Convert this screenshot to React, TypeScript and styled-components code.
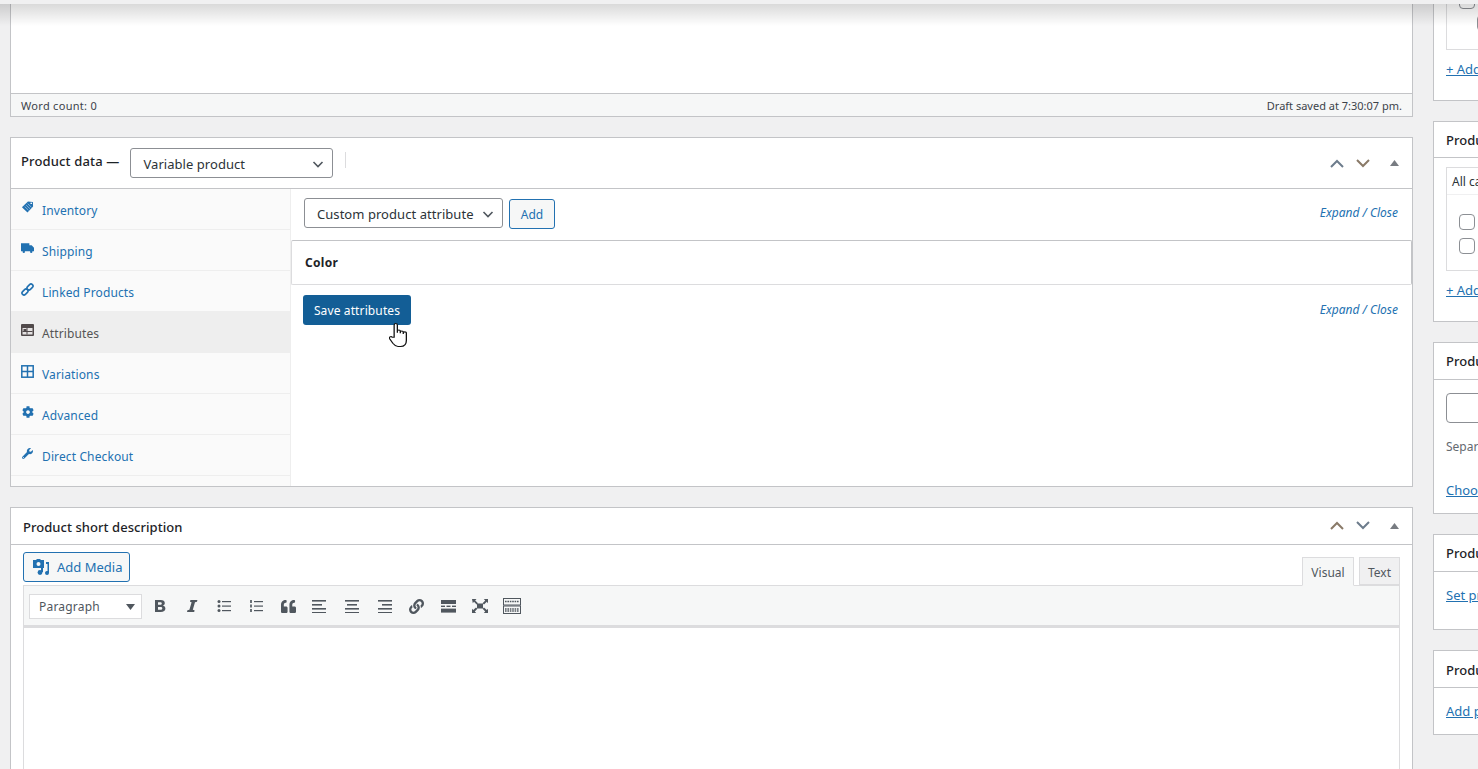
import styled, { createGlobalStyle } from "styled-components";
import { FaCog, FaLink, FaQuoteLeft, FaWrench } from "react-icons/fa";
import type { ReactNode } from "react";

const Global = createGlobalStyle`
  html, body { margin: 0; height: 769px; overflow: hidden; background: #f0f0f1; }
  body { font-family: "Noto Sans", "Liberation Sans", sans-serif; font-size: 13px; color: #3c434a; }
  * { box-sizing: border-box; }
`;

const Page = styled.div`
  position: relative;
  width: 1478px;
  height: 769px;
  overflow: hidden;
  padding-left: 10px;
  display: grid;
  grid-template-columns: 1403px 280px;
  column-gap: 20px;
  align-items: start;
`;

// the sticky admin toolbar that has scrolled away, only its shadow shows
const TopShade = styled.div`
  position: absolute;
  left: 0;
  right: 0;
  top: 0;
  height: 4px;
  background: #f0f0f1;

  &::after {
    content: "";
    position: absolute;
    left: 0;
    right: 0;
    top: 4px;
    height: 22px;
    background: linear-gradient(rgba(0, 0, 0, 0.15), rgba(0, 0, 0, 0));
  }
`;

const MainCol = styled.div`
  display: flex;
  flex-direction: column;
  gap: 20px;
`;

const SideCol = styled.div`
  display: flex;
  flex-direction: column;
  gap: 20px;
`;

const Box = styled.section`
  background: #fff;
  border: 1px solid #c3c4c7;
`;

const EditorBox = styled(Box)`
  height: 117px;
  border-top: 0;
  display: flex;
  flex-direction: column;
  justify-content: flex-end;
`;

const StatusBar = styled.div`
  height: 23px;
  border-top: 1px solid #c3c4c7;
  background: #f6f7f7;
  display: flex;
  align-items: center;
  justify-content: space-between;
  padding: 0 10px;
  font-size: 11px;
  color: #3c434a;
`;

const WordCount = styled.span`
  letter-spacing: 0.3px;
`;

const DataHead = styled.div`
  height: 51px;
  border-bottom: 1px solid #c3c4c7;
  display: flex;
  align-items: center;
  padding: 0 5px 0 10px;
`;

const HeadLabel = styled.span`
  font-size: 13px;
  font-weight: 500;
  letter-spacing: 0.15px;
  color: #1d2327;
  margin-right: 11px;
  position: relative;
  top: -2px;
`;

const SelectBox = styled.div<{ $w: number }>`
  width: ${(p) => p.$w}px;
  height: 30px;
  border: 1px solid #8c8f94;
  border-radius: 3px;
  background: #fff;
  display: flex;
  align-items: center;
  justify-content: space-between;
  padding: 1px 8px 0 12px;
  font-size: 13px;
  letter-spacing: 0.05px;
  color: #2c3338;
`;

const HeadDivider = styled.span`
  width: 1px;
  height: 16px;
  background: #dcdcde;
  margin-left: 12px;
  position: relative;
  top: -3px;
`;

const HandleGroup = styled.div`
  margin-left: auto;
  display: flex;
  align-items: center;
`;

const HandleBtn = styled.span`
  width: 26px;
  height: 20px;
  display: flex;
  align-items: center;
  justify-content: center;
  color: #787c82;
`;

const ToggleBtn = styled(HandleBtn)`
  margin-left: 5px;
`;

const DataBody = styled.div`
  display: grid;
  grid-template-columns: 280px 1fr;
  height: 297px;
`;

const TabList = styled.ul`
  list-style: none;
  margin: 0;
  padding: 0;
  background: #fafafa;
  border-right: 1px solid #eee;
`;

const TabItem = styled.li<{ $active?: boolean }>`
  height: 41px;
  padding: 2px 0 0 10px;
  display: flex;
  align-items: center;
  gap: 8px;
  font-size: 12px;
  letter-spacing: 0.12px;
  color: ${(p) => (p.$active ? "#555" : "#2271b1")};
  background: ${(p) => (p.$active ? "#eee" : "transparent")};
  border-bottom: 1px solid #eee;
`;

const TabIcon = styled.span`
  width: 13px;
  height: 13px;
  display: flex;
  align-items: center;
  justify-content: center;
  position: relative;
  top: -3px;
  flex: none;
`;

const AttrPane = styled.div`
  display: flex;
  flex-direction: column;
`;

const AttrToolbar = styled.div`
  height: 51px;
  display: flex;
  align-items: center;
  padding: 0 14px 3px 13px;
  gap: 6px;
`;

const AddBtn = styled.button`
  height: 30px;
  width: 46px;
  margin-top: 2px;
  border: 1px solid #2271b1;
  border-radius: 3px;
  background: #f6f7f7;
  color: #2271b1;
  font: inherit;
  font-size: 12px;
  padding: 0;
`;

const ExpandLinks = styled.span`
  margin-left: auto;
  margin-bottom: 2px;
  font-size: 12px;
  font-style: italic;
  font-weight: 400;
  color: #2271b1;
`;

const AttrRow = styled.div`
  height: 45px;
  border: 1px solid #dcdcde;
  border-top-color: #c3c4c7;
  border-right-color: #c3c4c7;
  border-radius: 2px;
  display: flex;
  align-items: center;
  padding: 0 13px 1px;
  font-size: 12px;
  letter-spacing: 0.3px;
  font-weight: 700;
  color: #1d2327;
`;

const SaveRow = styled.div`
  position: relative;
  height: 50px;
  display: flex;
  align-items: center;
  padding: 0 14px 0 12px;
`;

const SaveBtn = styled.button`
  height: 30px;
  width: 108px;
  border: 0;
  border-radius: 3px;
  background: #135e96;
  color: #fff;
  font: inherit;
  font-size: 12px;
  letter-spacing: 0.12px;
  padding: 0;
`;

const Cursor = styled.svg`
  position: absolute;
  left: 98px;
  top: 38px;
`;

const ShortBox = styled(Box)`
  height: 300px;
`;

const PlainHead = styled.div<{ $h?: number; $pt?: number }>`
  height: ${(p) => p.$h ?? 37}px;
  border-bottom: 1px solid #c3c4c7;
  display: flex;
  align-items: center;
  padding: ${(p) => p.$pt ?? 0}px 5px 0 12px;
  font-size: 13px;
  font-weight: 500;
  letter-spacing: 0.05px;
  color: #1d2327;
  white-space: nowrap;

  ${HandleGroup} {
    margin-top: -2px;
  }
`;

const WpWrap = styled.div`
  padding: 7px 12px 0;
`;

const WpTools = styled.div`
  height: 33px;
  display: flex;
  align-items: flex-start;
  justify-content: space-between;
`;

const MediaBtn = styled.button`
  width: 107px;
  height: 30px;
  border: 1px solid #2271b1;
  border-radius: 3px;
  background: #f6f7f7;
  color: #2271b1;
  font: inherit;
  font-size: 13px;
  padding: 0 0 0 8px;
  display: flex;
  align-items: center;
  gap: 7px;
`;

const ModeTabs = styled.div`
  display: flex;
  align-items: flex-end;
  gap: 5px;
  height: 33px;
  position: relative;
  z-index: 1;
`;

const ModeTab = styled.span<{ $active?: boolean }>`
  height: ${(p) => (p.$active ? 29 : 28)}px;
  width: ${(p) => (p.$active ? 52 : 41)}px;
  padding-top: ${(p) => (p.$active ? 1 : 2)}px;
  border: 1px solid #dcdcde;
  border-bottom-color: ${(p) => (p.$active ? "#f6f7f7" : "#dcdcde")};
  background: ${(p) => (p.$active ? "#f6f7f7" : "#f0f0f1")};
  color: #50575e;
  font-size: 12px;
  display: flex;
  align-items: center;
  justify-content: center;
  margin-bottom: ${(p) => (p.$active ? -1 : 0)}px;
`;

const McePanel = styled.div`
  height: 43px;
  border: 1px solid #dcdcde;
  border-bottom: 3px solid #dcdcde;
  background: #f6f7f7;
  display: flex;
  align-items: center;
  padding: 1px 0 0 5px;
`;

const FormatSelect = styled.div`
  width: 113px;
  height: 25px;
  background: #fff;
  border: 1px solid #dcdcde;
  margin-right: 2px;
  display: flex;
  align-items: center;
  justify-content: space-between;
  padding: 1px 6px 0 9px;
  font-size: 12px;
  letter-spacing: 0.2px;
  color: #50575e;
`;

const MceBtn = styled.span`
  width: 32px;
  height: 28px;
  display: flex;
  align-items: center;
  justify-content: center;
  color: #50575e;
`;

const MceCanvas = styled.div`
  height: 200px;
  background: #fff;
  border-left: 1px solid #dcdcde;
  border-right: 1px solid #dcdcde;
`;

const SideBody = styled.div`
  padding: 0 12px;
  white-space: nowrap;
`;

const FirstSide = styled(Box)`
  height: 101px;
  border-top: 0;
  display: flex;
  flex-direction: column;
`;

const FirstList = styled.div`
  height: 50px;
  margin: 0 12px;
  border: 1px solid #dcdcde;
  border-top: 0;
  padding-left: 12px;
`;

const Check = styled.span`
  display: block;
  width: 16px;
  height: 16px;
  border: 1px solid #8c8f94;
  border-radius: 4px;
  background: #fff;
`;

const CutCheck = styled(Check)`
  margin-top: -7px;
`;

const IndentCheck = styled(Check)`
  margin: 6px 0 0 18px;
`;

const SideLink = styled.a<{ $mt: number }>`
  display: block;
  margin-top: ${(p) => p.$mt}px;
  font-size: 13px;
  line-height: 18px;
  color: #2271b1;
  text-decoration: underline;
`;

const CatPanel = styled.div`
  height: 104px;
  margin-top: 9px;
  border: 1px solid #dcdcde;
`;

const CatTab = styled.div`
  height: 27px;
  padding: 5px 5px 0;
  font-size: 12px;
  color: #2c3338;
  border-bottom: 1px solid #f0f0f1;
`;

const CatList = styled.div`
  padding: 19px 0 0 12px;
  display: flex;
  flex-direction: column;
  gap: 8px;
`;

const TagInput = styled.div`
  height: 30px;
  width: 200px;
  margin-top: 13px;
  border: 1px solid #8c8f94;
  border-radius: 4px;
  background: #fff;
`;

const Hint = styled.p`
  margin: 15px 0 0;
  font-size: 12px;
  line-height: 18px;
  color: #646970;
`;

const TagsBox = styled(Box)`
  height: 172px;
`;

const ImageBox = styled(Box)`
  height: 96px;
`;

const GalleryBox = styled(Box)`
  height: 85px;
`;

const CatBox = styled(Box)`
  height: 201px;
`;

const Chevron = ({ size = 12 }: { size?: number }) => (
  <svg width={size} height={size} viewBox="0 0 12 12" fill="none" stroke="#50575e" strokeWidth="1.6">
    <path d="M1.5 4 L6 8.5 L10.5 4" />
  </svg>
);

const Handles = ({ first }: { first?: boolean }) => (
  <HandleGroup>
    <HandleBtn>
      <svg width="14" height="9" viewBox="0 0 14 9" fill="none" stroke={first ? "#8a7a68" : "#6d7c8c"} strokeWidth="2">
        <path d="M1 8 L7 2 L13 8" />
      </svg>
    </HandleBtn>
    <HandleBtn>
      <svg width="14" height="9" viewBox="0 0 14 9" fill="none" stroke={first ? "#6d7c8c" : "#8a7a68"} strokeWidth="2">
        <path d="M1 1 L7 7 L13 1" />
      </svg>
    </HandleBtn>
    <ToggleBtn>
      <svg width="9" height="6" viewBox="0 0 9 6" fill="#787c82">
        <path d="M4.5 0 L9 6 H0 Z" />
      </svg>
    </ToggleBtn>
  </HandleGroup>
);

const TagIcon = () => (
  <svg width="14" height="14" viewBox="0 0 14 14">
    <path d="M7.5 1 L12.8 1.6 L13 6.5 L7 12.8 L1 7.2 Z" fill="#2271b1" />
    <path d="M4 6.6 L8 10.4 M5.6 5 L9.6 8.8 M7.2 3.4 L11.2 7.2" stroke="#a9c8e4" strokeWidth="0.8" />
    <circle cx="11" cy="3" r="0.9" fill="#fff" />
  </svg>
);

const TruckIcon = () => (
  <svg width="14" height="12" viewBox="0 0 14 12" fill="#2271b1">
    <path d="M0 1 H9 V3 H11.5 L14 5.6 V9.6 H0 Z" />
    <circle cx="3" cy="10" r="1.3" />
    <circle cx="11" cy="10" r="1.3" />
  </svg>
);

const LinkIcon = () => (
  <svg width="13" height="13" viewBox="0 0 13 13" fill="none" stroke="#2271b1" strokeWidth="1.6">
    <rect x="-3.4" y="-2" width="6.8" height="4" rx="2" transform="translate(4 9) rotate(-45)" />
    <rect x="-3.4" y="-2" width="6.8" height="4" rx="2" transform="translate(9 4) rotate(-45)" />
  </svg>
);

const AttrIcon = () => (
  <svg width="13" height="12" viewBox="0 0 13 12">
    <rect x="0" y="0" width="13" height="12" rx="1" fill="#50494a" />
    <rect x="1.5" y="4" width="10" height="6.5" fill="#e4e2e2" />
    <rect x="2.5" y="5" width="3" height="2" fill="#50494a" />
    <rect x="1.5" y="7" width="10" height="1" fill="#50494a" />
    <rect x="5.5" y="4" width="1" height="6.5" fill="#50494a" />
  </svg>
);

const GridIcon = () => (
  <svg width="13" height="13" viewBox="0 0 13 13" fill="none" stroke="#2271b1" strokeWidth="1.5">
    <rect x="0.8" y="0.8" width="11.4" height="11.4" />
    <path d="M6.5 1 V12 M1 6.5 H12" />
  </svg>
);

const tabs: { label: string; icon: ReactNode; active?: boolean }[] = [
  { label: "Inventory", icon: <TagIcon /> },
  { label: "Shipping", icon: <TruckIcon /> },
  { label: "Linked Products", icon: <LinkIcon /> },
  { label: "Attributes", icon: <AttrIcon />, active: true },
  { label: "Variations", icon: <GridIcon /> },
  { label: "Advanced", icon: <FaCog size={12} color="#2271b1" /> },
  { label: "Direct Checkout", icon: <FaWrench size={11} color="#2271b1" /> },
];

const ListLines = ({ numbered }: { numbered?: boolean }) => (
  <svg width="14" height="14" viewBox="0 0 14 14" fill="#50575e">
    {[2, 6.5, 11].map((y) => (
      <g key={y}>
        <rect x="5" y={y} width="9" height="1.2" />
        {numbered ? <rect x="1" y={y - 1} width="2" height="3" fill="#6b7278" /> : <circle cx="2" cy={y + 0.6} r="1.5" />}
      </g>
    ))}
  </svg>
);

const AlignLines = ({ rows }: { rows: [number, number][] }) => (
  <svg width="16" height="14" viewBox="0 0 16 14" fill="#50575e">
    {rows.map(([x, w], i) => (
      <rect key={i} x={x} y={1 + i * 4} width={w} height="1.6" />
    ))}
  </svg>
);

const toolbarIcons: ReactNode[] = [
  <svg width="12" height="14" viewBox="0 0 12 14" fill="#50575e">
    <path d="M1 1 H6.6 C9.4 1 10.8 2.2 10.8 4 C10.8 5.3 10 6.2 8.8 6.6 C10.4 7 11.4 8 11.4 9.6 C11.4 11.8 9.6 13 6.8 13 H1 Z M4 3.2 V5.8 H6.2 C7.2 5.8 7.8 5.3 7.8 4.5 C7.8 3.7 7.2 3.2 6.2 3.2 Z M4 7.9 V10.8 H6.4 C7.6 10.8 8.3 10.3 8.3 9.3 C8.3 8.4 7.6 7.9 6.4 7.9 Z" fillRule="evenodd" />
  </svg>,
  <svg width="12" height="14" viewBox="0 0 12 14" fill="#50575e">
    <path d="M4.4 1 H11.4 L11 2.8 L9 3.2 L6.8 10.8 L8.6 11.2 L8.2 13 H1 L1.4 11.2 L3.4 10.8 L5.6 3.2 L4 2.8 Z" />
  </svg>,
  <ListLines />,
  <ListLines numbered />,
  <FaQuoteLeft size={15} color="#50575e" />,
  <AlignLines rows={[[0, 14], [0, 10], [0, 14], [0, 14]]} />,
  <AlignLines rows={[[1, 14], [3, 10], [1, 14], [1, 14]]} />,
  <AlignLines rows={[[2, 14], [6, 10], [2, 14], [2, 14]]} />,
  <FaLink size={15} color="#50575e" />,
  <svg width="15" height="13" viewBox="0 0 15 13" fill="#50575e">
    <rect x="0" y="0" width="15" height="4" />
    <rect x="0" y="5.6" width="4" height="1.4" />
    <rect x="5.5" y="5.6" width="4" height="1.4" />
    <rect x="11" y="5.6" width="4" height="1.4" />
    <rect x="0" y="8.6" width="15" height="4" />
  </svg>,
  <svg width="16" height="14" viewBox="0 0 16 14" fill="#50575e">
    <rect x="5" y="4.5" width="6" height="5" />
    <path d="M0 0 H4.5 L3.2 1.4 L6 4.2 L4.6 5.4 L2 2.8 L0.8 4.2 Z M16 0 V4.2 L14.8 2.8 L12 5.4 L10.6 4.2 L13.2 1.4 L11.8 0 Z M0 14 V9.8 L1.2 11 L4 8.4 L5.4 9.8 L2.8 12.4 L4.2 14 Z M16 14 H11.8 L13.2 12.4 L10.6 9.8 L12 8.4 L14.8 11 L16 9.8 Z" />
  </svg>,
  <svg width="18" height="16" viewBox="0 0 18 16" fill="none" stroke="#50575e">
    <rect x="0.5" y="0.5" width="17" height="6.5" />
    <rect x="0.5" y="8" width="17" height="7.5" />
    <path d="M2 3.5 H16 M2 11 H16 M2 13 H16" strokeWidth="1.6" strokeDasharray="1.6 0.8" />
  </svg>,
];

export default function App() {
  return (
    <Page>
      <Global />
      <MainCol>
        <EditorBox>
          <StatusBar>
            <WordCount>Word count: 0</WordCount>
            <span>Draft saved at 7:30:07 pm.</span>
          </StatusBar>
        </EditorBox>

        <Box>
          <DataHead>
            <HeadLabel>Product data —</HeadLabel>
            <SelectBox $w={203}>
              Variable product
              <Chevron />
            </SelectBox>
            <HeadDivider />
            <Handles />
          </DataHead>
          <DataBody>
            <TabList>
              {tabs.map((t) => (
                <TabItem key={t.label} $active={t.active}>
                  <TabIcon>{t.icon}</TabIcon>
                  {t.label}
                </TabItem>
              ))}
            </TabList>
            <AttrPane>
              <AttrToolbar>
                <SelectBox $w={199}>
                  Custom product attribute
                  <Chevron />
                </SelectBox>
                <AddBtn>Add</AddBtn>
                <ExpandLinks>Expand / Close</ExpandLinks>
              </AttrToolbar>
              <AttrRow>Color</AttrRow>
              <SaveRow>
                <SaveBtn>Save attributes</SaveBtn>
                <ExpandLinks>Expand / Close</ExpandLinks>
                <Cursor width="18" height="24" viewBox="0.5 1 14 22" preserveAspectRatio="none" fill="#fff" stroke="#111" strokeWidth="1">
                  <path d="M4.5 14 V3 C4.5 1 7 1 7 3 V10 V8.5 C7 7 9.3 7 9.3 8.5 V10.5 V9.3 C9.3 8 11.6 8 11.6 9.3 V11 V10 C11.6 8.8 14 8.8 14 10 V17 C14 20 12.5 22.5 9.5 22.5 H7.5 C5.5 22.5 4.5 21 3.5 19.5 L1 15.5 C0.2 14 2 12.8 3 14 Z" />
                </Cursor>
              </SaveRow>
            </AttrPane>
          </DataBody>
        </Box>

        <ShortBox>
          <PlainHead $pt={1}>
            <span>Product short description</span>
            <Handles first />
          </PlainHead>
          <WpWrap>
            <WpTools>
              <MediaBtn>
                <svg width="18" height="17" viewBox="0 0 18 17" fill="#2271b1">
                  <path d="M1 1 H4 L5 0 H8 L9 1 H12 V9 H1 Z" />
                  <circle cx="6.5" cy="5" r="2" fill="#f6f7f7" />
                  <path d="M14 3 H17 V14 A2 2 0 1 1 15.5 12 V5 H14 Z" />
                  <circle cx="8" cy="13.5" r="2.4" />
                  <path d="M9 6 H11 V13 H9 Z" />
                </svg>
                Add Media
              </MediaBtn>
              <ModeTabs>
                <ModeTab $active>Visual</ModeTab>
                <ModeTab>Text</ModeTab>
              </ModeTabs>
            </WpTools>
            <McePanel>
              <FormatSelect>
                Paragraph
                <svg width="9" height="6" viewBox="0 0 9 6" fill="#50575e">
                  <path d="M0 0 H9 L4.5 6 Z" />
                </svg>
              </FormatSelect>
              {toolbarIcons.map((icon, i) => (
                <MceBtn key={i}>{icon}</MceBtn>
              ))}
            </McePanel>
            <MceCanvas />
          </WpWrap>
        </ShortBox>
      </MainCol>

      <SideCol>
        <FirstSide>
          <FirstList>
            <CutCheck />
            <IndentCheck />
          </FirstList>
          <SideBody>
            <SideLink $mt={10}>+ Add new brand</SideLink>
          </SideBody>
        </FirstSide>

        <CatBox>
          <PlainHead $h={36} $pt={1}>Product categories</PlainHead>
          <SideBody>
            <CatPanel>
              <CatTab>All categories</CatTab>
              <CatList>
                <Check />
                <Check />
              </CatList>
            </CatPanel>
            <SideLink $mt={10}>+ Add new category</SideLink>
          </SideBody>
        </CatBox>

        <TagsBox>
          <PlainHead>Product tags</PlainHead>
          <SideBody>
            <TagInput />
            <Hint>Separate tags with commas</Hint>
            <SideLink $mt={25}>Choose from the most used tags</SideLink>
          </SideBody>
        </TagsBox>

        <ImageBox>
          <PlainHead>Product image</PlainHead>
          <SideBody>
            <SideLink $mt={14}>Set product image</SideLink>
          </SideBody>
        </ImageBox>

        <GalleryBox>
          <PlainHead $pt={1}>Product gallery</PlainHead>
          <SideBody>
            <SideLink $mt={14}>Add product gallery images</SideLink>
          </SideBody>
        </GalleryBox>
      </SideCol>
      <TopShade />
    </Page>
  );
}
